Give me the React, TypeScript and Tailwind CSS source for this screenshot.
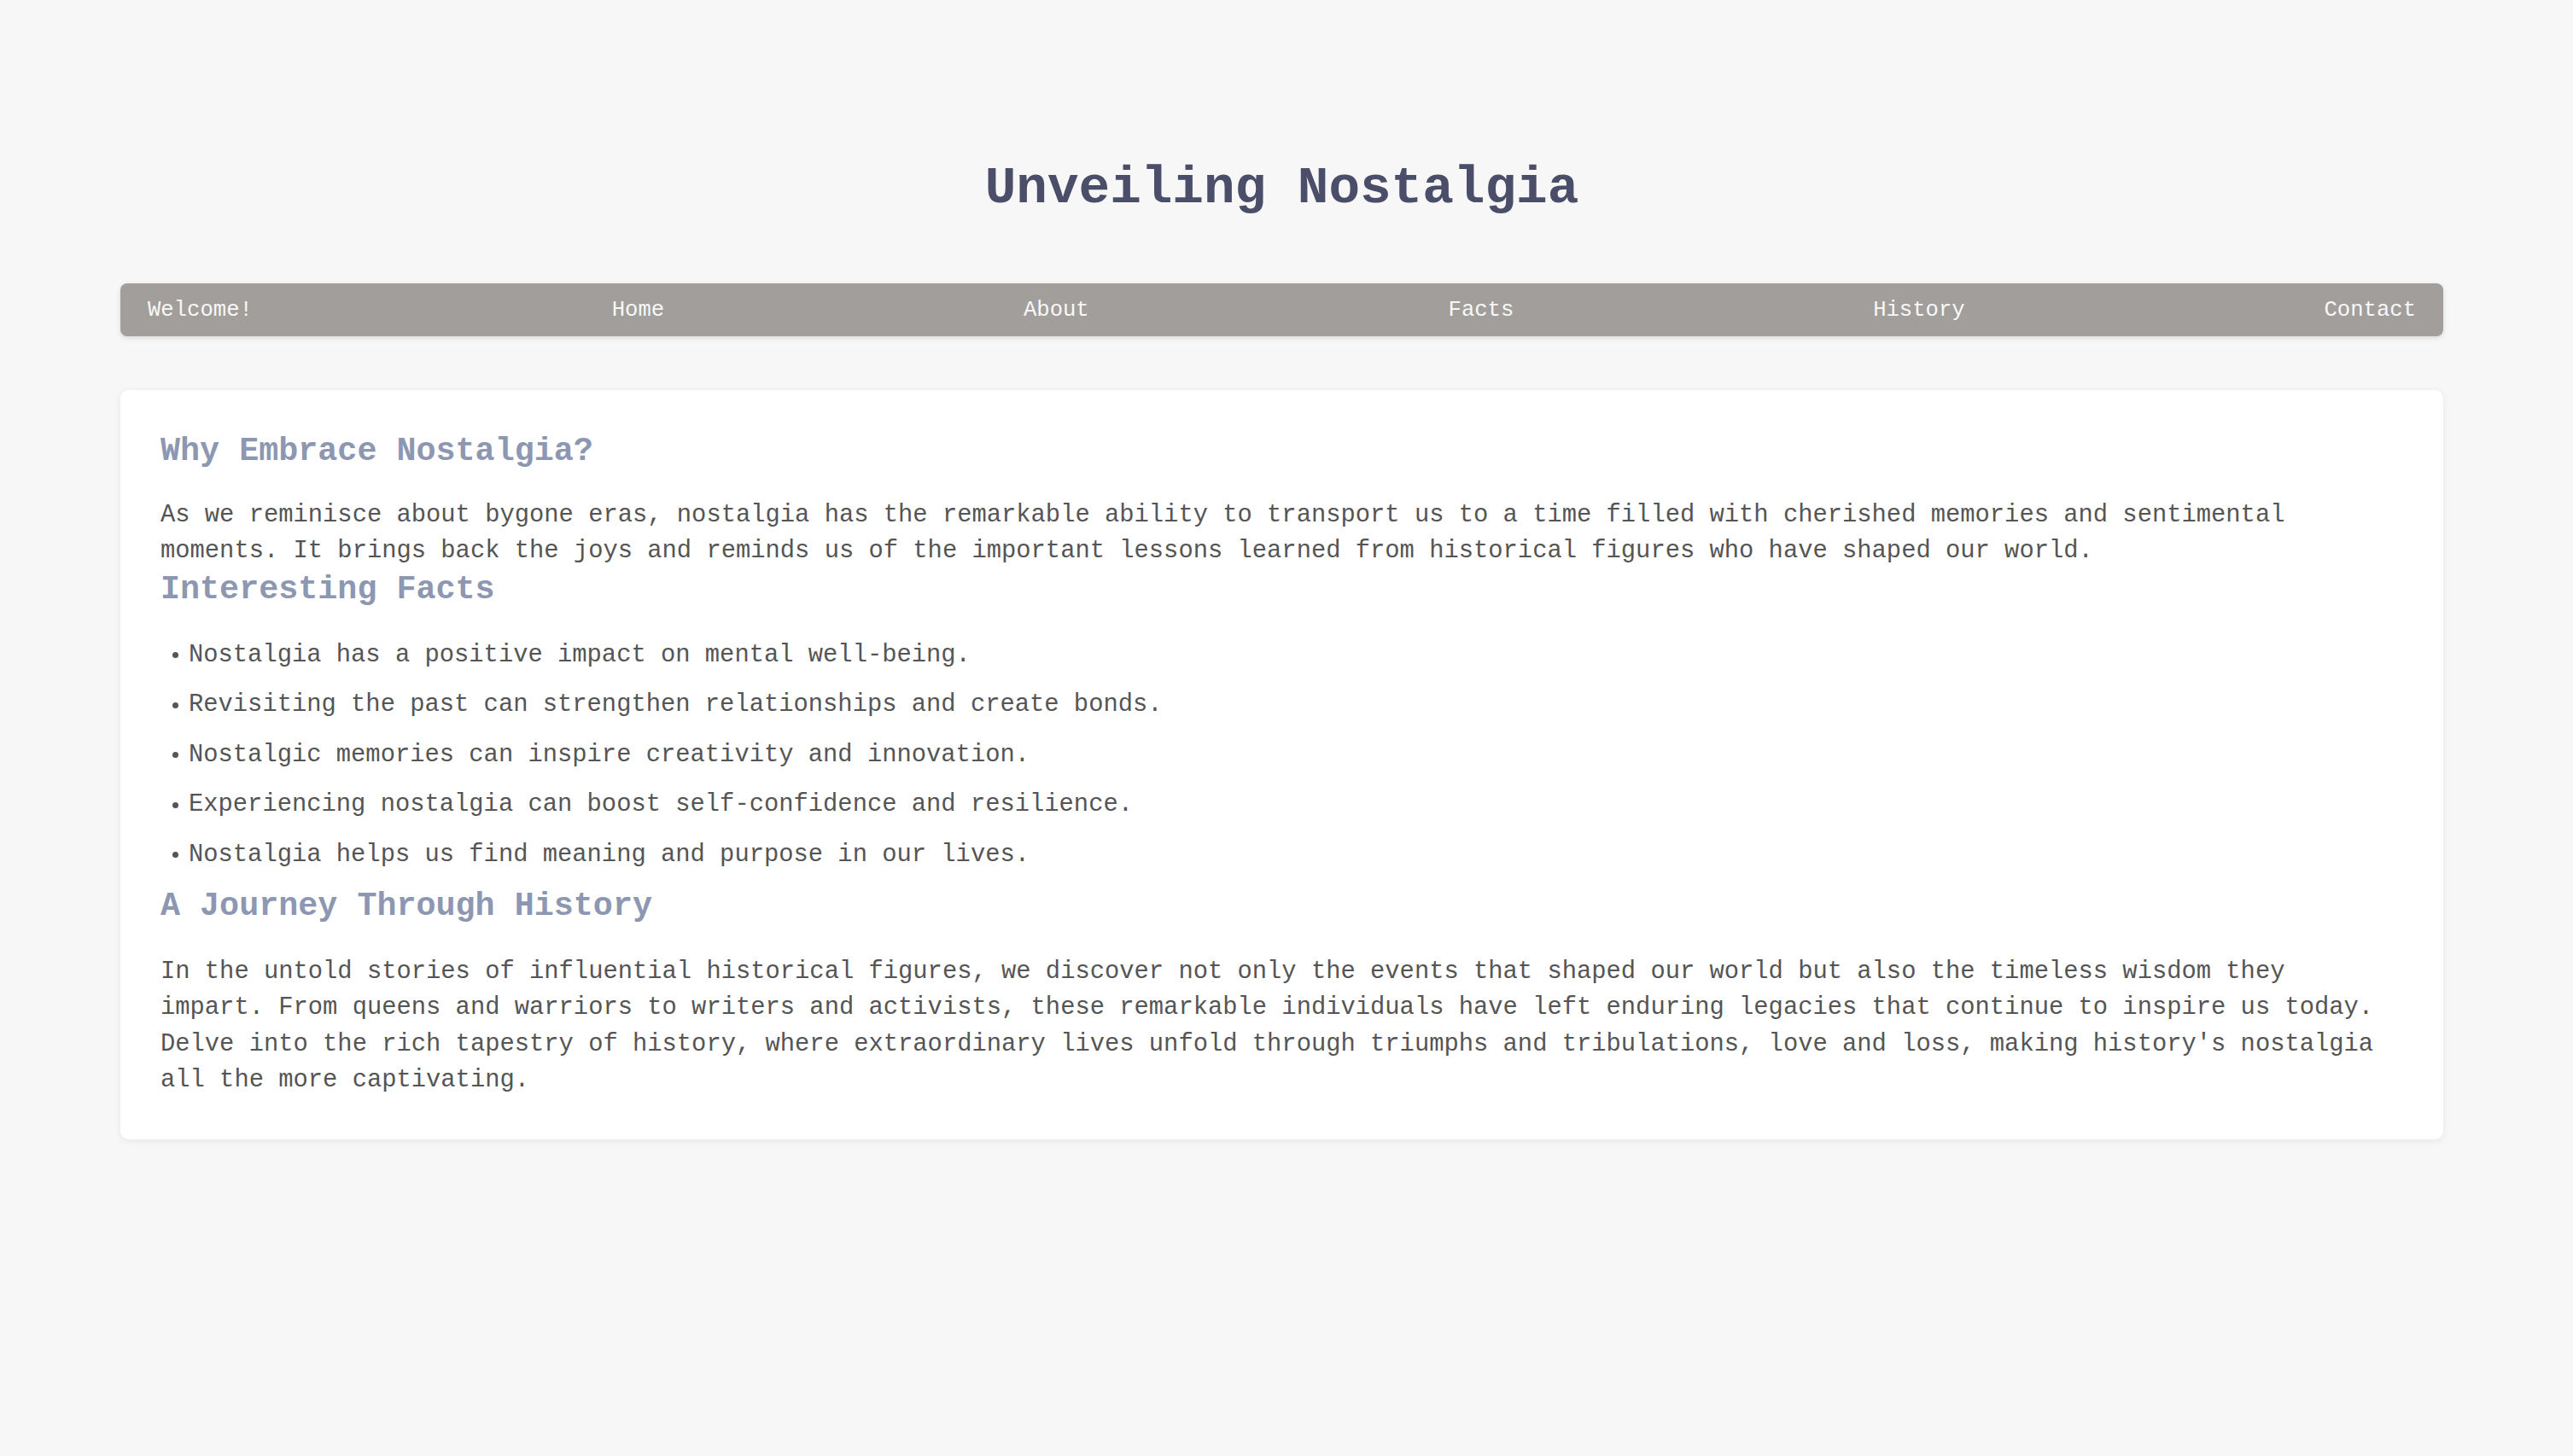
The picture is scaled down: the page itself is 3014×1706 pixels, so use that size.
const NAV_ITEMS = ['Welcome!', 'Home', 'About', 'Facts', 'History', 'Contact'];

const FACTS = [
  'Nostalgia has a positive impact on mental well-being.',
  'Revisiting the past can strengthen relationships and create bonds.',
  'Nostalgic memories can inspire creativity and innovation.',
  'Experiencing nostalgia can boost self-confidence and resilience.',
  'Nostalgia helps us find meaning and purpose in our lives.',
];

function SectionTitle({ children, className = '' }: { children: string; className?: string }) {
  return <h2 className={`text-[38.4px] font-bold leading-[46px] text-[#8d97b1] ${className}`}>{children}</h2>;
}

export default function App(): JSX.Element {
  return (
    <div className="min-h-screen bg-[#f7f7f7] font-['Liberation_Mono','Courier_New',monospace] text-[#555555]">
      <div className="ml-[141px] w-[2721px] pt-[185px]">
        <h1 className="text-center text-[61px] font-bold leading-[72px] text-[#4a4e69]">Unveiling Nostalgia</h1>

        <nav className="mt-[75px] flex h-[62px] items-center justify-between rounded-[8px] bg-[#a19e9c] px-[32px] pt-[2px] shadow-[0_2px_6px_rgba(0,0,0,0.12)]">
          {NAV_ITEMS.map((item) => (
            <a key={item} href="#" className="text-[25.6px] leading-[30px] text-[#f8f8f8]">
              {item}
            </a>
          ))}
        </nav>

        <main className="mt-[63px] rounded-[10px] bg-white pb-[48px] pl-[47px] pr-[68px] pt-[49px] shadow-[0_2px_8px_rgba(0,0,0,0.07)]">
          <SectionTitle className="mb-[31px]">Why Embrace Nostalgia?</SectionTitle>
          <p className="text-[28.8px] leading-[42.3px]">
            As we reminisce about bygone eras, nostalgia has the remarkable ability to transport us to a time filled with
            cherished memories and sentimental moments. It brings back the joys and reminds us of the important lessons
            learned from historical figures who have shaped our world.
          </p>

          <SectionTitle className="mb-[33px]">Interesting Facts</SectionTitle>
          <ul>
            {FACTS.map((fact) => (
              <li key={fact} className="mb-[16.5px] flex text-[28.8px] leading-[42px]">
                <span className="flex w-[33px] shrink-0 items-center">
                  <span className="ml-[14px] h-[7px] w-[7px] rounded-full bg-[#555555]" />
                </span>
                {fact}
              </li>
            ))}
          </ul>

          <SectionTitle className="mb-[33px]">A Journey Through History</SectionTitle>
          <p className="text-[28.8px] leading-[42.3px]">
            In the untold stories of influential historical figures, we discover not only the events that shaped our
            world but also the timeless wisdom they impart. From queens and warriors to writers and activists, these
            remarkable individuals have left enduring legacies that continue to inspire us today. Delve into the rich
            tapestry of history, where extraordinary lives unfold through triumphs and tribulations, love and loss, making
            history's nostalgia all the more captivating.
          </p>
        </main>
      </div>
    </div>
  );
}
